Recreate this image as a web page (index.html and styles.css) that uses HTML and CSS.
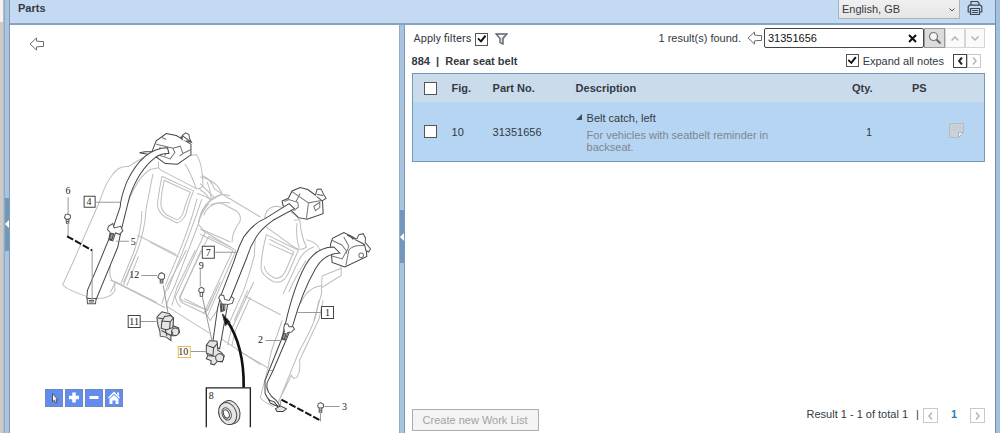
FILE: index.html
```html
<!DOCTYPE html>
<html lang="en">
<head>
<meta charset="utf-8">
<meta name="viewport" content="width=device-width, initial-scale=1">
<title>Parts</title>
<link rel="stylesheet" href="styles.css">
</head>
<body>
<div class="app">
  <div class="edge"></div>
  <div class="splitter"><button class="grip" aria-label="Collapse navigation"></button></div>
  <main class="main">
    <header class="header">
      <h1 class="title">Parts</h1>
      <div class="header-tools">
        <div class="lang">
          <select class="lang-select" aria-label="Language"><option>English, GB</option></select>
          <svg class="lang-arrow" width="6" height="4" viewBox="0 0 6 4"><path d="M.5.5 3 3 5.500.5" fill="none" stroke="#555"/></svg>
        </div>
        <button class="bare" aria-label="Print">
          <svg width="16" height="16" viewBox="0 0 16 16" fill="none" stroke="#3c4652" stroke-width="1.200"><path d="M4 5V1.500h6.500L12 3v2M3.500 12H1.200V6.500L2.500 5.200h11l1.300 1.300V12h-2.300M3.500 8.500h9v6h-9zM5 10.500h6M5 12.500h6"/></svg>
        </button>
      </div>
    </header>
    <div class="panes">
      <section class="figure" aria-label="Illustration">
        <svg class="drawing" viewBox="10 25 388 402">
          <!-- seat back -->
          <g class="faint">
            <g transform="translate(50 120) scale(.3333)">
              <path d="M308 96Q260 122 235 139Q205 136 188 162Q165 190 150 240L72 418L38 493Q50 508 110 528"/>
              <path d="M138 534Q178 536 194 512V484M180 442Q176 470 188 482L345 562M220 486L262 390Q285 325 287 270L308 162"/>
              <path d="M212 490L252 392Q276 320 275 272M180 442Q182 400 208 330Q245 180 300 148L325 143L332 150L438 205L452 206M325 143V125M438 103Q455 125 458 190Q460 205 438 206M403 132Q416 145 438 205M438 103L422 106"/>
              <path d="M335 168L430 212Q414 250 408 278Q398 306 380 308L345 290Q320 275 322 246Q328 205 335 168M342 180L420 216Q406 250 400 274Q392 298 378 298L350 284Q330 270 332 246Q334 215 342 180"/>
              <path d="M455 165Q485 180 492 205L514 220M470 185Q480 205 483 238M440 220Q462 225 483 238M440 235Q425 300 385 400L345 495M455 236Q430 310 395 400L352 510M475 250Q450 280 444 312L372 500Q345 550 350 565"/>
              <path d="M444 312Q454 240 515 222L540 226M444 312L460 330L540 365M465 335L375 530Q380 550 392 560M540 380L475 348L388 530L395 540L470 569M262 345L378 402M540 248Q478 240 460 285"/>
            </g>
            <g transform="translate(200 170) scale(.3333)">
              <path d="M0 20Q50 30 66 72L45 82Q20 95 0 135M66 72L180 140M0 176L107 240M0 192L98 240M30 105Q55 92 76 105L108 122Q125 135 118 155Q95 185 95 216M0 40L45 85M0 60Q15 65 30 90"/>
              <path d="M107 240L20 440M98 240L10 430M165 190L162 256Q148 310 130 360L90 450M193 145Q195 110 230 108Q265 112 298 148Q302 200 318 230Q300 245 278 228L190 165M298 148L280 150M290 158Q285 200 296 232"/>
              <path d="M198 193L294 240Q280 270 266 304Q252 342 220 334Q182 315 182 292Q182 255 198 193M207 207L280 244L258 296Q245 330 220 322Q192 306 192 288M205 220L280 254"/>
              <path d="M318 208Q352 216 359 240M340 230Q310 240 295 270L248 370M317 270Q285 320 265 365M142 360L102 450M132 376L240 433M365 317L422 294V315Q395 332 363 352L365 317M363 352V370Q355 400 340 450M300 400Q320 350 365 345M422 294L418 275"/>
            </g>
            <g transform="translate(110 250) scale(.3333)">
              <path d="M0 90L15 94L140 156M170 168L297 248M325 260L450 342M15 94Q5 120 0 126M40 104L75 15M50 106L85 18M120-24L205 20M155 160L172 105L228 0M185 165L200 112L255 0M210 140L272 0M210 140Q204 154 222 160L285 190L330 95M222 145L292 180L320 115M288 190L300 210L340 150M352 285L362 240L430 95M365 285L375 240L420 140"/>
            </g>
            <g transform="translate(200 300) scale(.3333)">
              <path d="M110 148L203 202Q210 150 230 105L245 60M203 202L180 290Q180 298 220 318M355 0L346 48Q330 95 297 150L230 315M368 0L356 55L297 180Q302 208 290 230Q280 238 273 224L232 308"/>
            </g>
          </g>
          <!-- belts, retractors and buckles -->
          <g class="ink">
            <g transform="translate(50 120) scale(.3333)">
              <path class="solid" d="M268 98L285 95L305 95L318 62L348 40L378 46L422 72V104L382 132L345 130L312 106Z"/>
              <path class="detail" d="M318 72L368 84L374 97L360 116L312 100M330 80L325 97M348 89L344 108M368 84L390 78L398 100L422 88M398 100L388 108M335 52L348 58"/>
              <path class="solid" d="M352 83Q278 84 230 185Q212 230 210 260L183 340L150 420L112 510L110 533L138 537L203 380L213 330L238 230Q265 150 315 112Q335 98 356 100Z"/>
              <path class="mid" d="M396 60V46L406 38L416 43L418 55L424 67L408 62M390 52L398 48L424 67"/>
              <path class="mid" d="M175 318L188 310L192 323L212 318L218 332L208 342L196 338L188 362L176 358L180 336L172 328Z"/><path class="shade" d="M182 339L191 341L185 359L178 356Z"/>
              <path class="mid" d="M111 534H138L136 550H112ZM116 540L132 540M116 545H132"/>
              <path class="mid" d="M46 283L54 281L61 285V293L57 296L56 309L49 309L48 297L43 292Z"/><path d="M48 297H57M49 303H56"/>
              <path class="mid" d="M327 461L334 457L343 462V472L338 478V488L330 488L330 477L323 471Z"/><path d="M330 477H340M330 482H338"/>
              <path class="mid" d="M447 504L454 501L461 505V514L457 518V529L450 528L449 516L445 512Z"/><path d="M449 516H458"/>
            </g>
            <g transform="translate(200 170) scale(.3333)">
              <path class="solid" d="M248 106L245 92L264 84L275 62L299 52L322 58L366 90L368 130L320 147L294 142L270 118Z"/>
              <path class="detail" d="M252 94L265 88L292 96L294 110L280 122M286 96L299 70M318 145L324 98L366 90M324 98L275 64M340 108L358 96V112L345 121Z"/>
              <path class="mid" d="M345 75L350 57L362 56L369 72L377 84L365 92L350 80M350 73L368 76"/>
              <path class="solid" d="M390 222L396 204L430 187L457 200L496 226L499 258L433 290L395 276Z"/>
              <path class="detail" d="M394 210L424 224L438 242L425 266L392 256M430 200L445 228L436 250M436 286L445 240Q455 222 496 226"/>
              <circle cx="482" cy="255" r="7" class="detail"/>
              <path class="mid" d="M440 194L450 196L456 206L470 204L475 193L488 190L495 203L494 216L510 236L504 245L496 240L492 222L472 212Z"/>
            </g>
            <g transform="translate(190 220) scale(.3333)">
              <path class="belt" d="M296-50L224-5Q190 8 160 50Q144 80 132 120L92 225L82 262L66 375L88 385L112 252L120 235L170 110Q182 70 206 38Q220 20 248 0L312-35Z"/>
              <path class="belt" d="M430 80Q375 80 345 135Q310 200 285 310L274 355L236 450L248 450L295 340L308 312Q335 215 375 145Q400 100 448 98Z"/>
              <path class="mid" d="M85 232L90 223L100 225L103 237L116 240L123 228L131 235L126 249L112 252L104 251L103 270L92 274L90 253L93 246Z"/>
              <path class="shade" d="M94 250L101 252L99 270L93 271Z"/>
              <path class="mid" d="M280 322L283 311L292 311L296 319L308 319L312 326L303 335L292 336L285 359L273 356L282 333Z"/>
              <path class="shade" d="M280 338L287 340L282 357L275 355Z"/>
            </g>
            <g transform="translate(110 250) scale(.3333)">
              <path class="buckle" d="M140 200L155 184L178 190L188 202V226L205 232L208 246L195 256L182 256V270L168 260L150 257L149 242L143 224Z"/>
              <path class="buckle" d="M155 212L163 198L180 195L190 202L188 231L170 238L153 234ZM155 212L180 214L190 202M180 214L178 236M142 203L160 205"/>
              <circle cx="195" cy="244" r="11" class="buckle"/><path d="M154 240L182 255L188 244M165 236L170 256"/>
              <path class="buckle" d="M288 284L299 270L320 272L323 300L332 305L342 316L336 334L321 332L312 343L301 340L303 331L288 325L293 313L288 307Z"/>
              <path class="buckle" d="M288 284L310 292L322 278M310 292L308 316L290 308M294 316L325 318"/><circle cx="328" cy="322" r="12" class="buckle"/>
              <path class="frame" d="M288 530V412H420V530"/>
              <ellipse cx="360" cy="485" rx="28" ry="36" transform="rotate(-22 360 485)" class="buckle"/>
              <ellipse cx="352" cy="489" rx="26" ry="34" transform="rotate(-22 352 489)" class="buckle"/>
              <ellipse cx="349" cy="490" rx="13" ry="19" transform="rotate(-22 349 490)" class="mid"/>
              <ellipse cx="348" cy="490" rx="8" ry="13" transform="rotate(-22 348 490)"/>
              <path d="M400 411Q402 285 348 207" fill="none" stroke="#111" stroke-width="8"/><path d="M336 190L359 215L345 225Z" fill="#111"/>
            </g>
            <g transform="translate(200 300) scale(.3333)">
              <path class="belt" d="M206 210L194 240V278Q205 306 235 317L240 318L228 300Q194 275 200 247L218 210"/>
              <path class="buckle" d="M225 325L240 316L258 325L248 333H230ZM205 298L222 304L232 318L210 308Z"/>
              <path class="mid" d="M353 310L360 306L369 311V319L364 323V335H356V323L352 319Z"/><path d="M356 322H365M356 329H364"/>
            </g>
          </g>
          <g class="leaders">
            <path d="M68 197V214M68 222V236M92 250V300M96 202H120M116 241H129M141 275H157M163 285L168 314M200 269V286M202 296L212 342M215 252H238M140 321H158M190 351H206M297 312H320M265 340H281M280 400V407M320 411V421M324 406H339"/>
          </g>
          <path class="dash" d="M67 236L92 250"/><path class="dash" d="M281 399L320 420"/>
          <g class="boxes"><path d="M84 196h11v11h-11zM202 246h12v12h-12zM128 315h12v12h-12zM321 306h12v12h-12z"/><path class="picked" d="M178 346h12v11h-12z"/></g>
          <g class="labels">
            <text x="68" y="194">6</text><text x="89" y="205">4</text><text x="133" y="245">5</text><text x="134" y="278">12</text><text x="201" y="269">9</text><text x="208" y="256">7</text><text x="134" y="325">11</text><text x="183" y="355">10</text><text x="327" y="316">1</text><text x="260" y="343">2</text><text x="344" y="409">3</text><text x="211" y="398">8</text>
          </g>
        </svg>
        <button class="bare figure-back" aria-label="Previous illustration"><svg width="16" height="14" viewBox="0 0 16 14"><path class="arrow" d="M1 7 7.500 1V4L11 4.500H14.500V9.500H11L7.500 10V13Z"/></svg></button>
        <div class="figure-tools">
          <button class="tool" aria-label="Select"><svg width="18" height="18" viewBox="0 0 18 18"><path d="M7.500 4.500V13L9.300 11.300 10.500 14 12 13.200 10.900 10.800H13Z" fill="#f6f6f6" stroke="#555"/></svg></button>
          <button class="tool" aria-label="Zoom in"><svg width="18" height="18" viewBox="0 0 18 18"><path d="M9 3.500V13.500M4 8.500H14" stroke="#fff" stroke-width="3.500"/></svg></button>
          <button class="tool" aria-label="Zoom out"><svg width="18" height="18" viewBox="0 0 18 18"><path d="M4.500 8.500H13.500" stroke="#fff" stroke-width="3"/></svg></button>
          <button class="tool" aria-label="Fit"><svg width="18" height="18" viewBox="0 0 18 18" fill="#fff"><path d="M9 2.500 15 8.500 14 9.500 9 4.800 4 9.500 3 8.500ZM12 3.500H14V7L12 5ZM9 6 13.500 10V15H10.500V11.500H7.500V15H4.500V10Z"/></svg></button>
        </div>
      </section>
      <div class="splitter"><button class="grip" aria-label="Collapse illustration"></button></div>
      <section class="list">
        <div class="bar">
          <div class="filters"><label for="filters">Apply filters</label><input class="check" id="filters" type="checkbox" checked>
            <button class="bare" aria-label="Filter"><svg width="13" height="12" viewBox="0 0 13 12"><path d="M1 1H12L8 5.500V11L5 9.500V5.500Z" fill="#f4f6f8" stroke="#5a636c" stroke-width="1.300"/><path d="M11 1.500 7.500 5.500V10" fill="none" stroke="#7a838c" stroke-width="1.500"/></svg></button>
          </div>
          <div class="search">
            <span class="found">1 result(s) found.</span>
            <button class="bare" aria-label="Back"><svg width="16" height="14" viewBox="0 0 16 14"><path class="arrow" d="M1 7 7.500 1V4L11 4.500H14.500V9.500H11L7.500 10V13Z"/></svg></button>
            <div class="search-box">
              <input class="search-input" type="text" value="31351656" aria-label="Search">
              <button class="bare clear" aria-label="Clear"><svg width="9" height="9" viewBox="0 0 9 9"><path d="M1 1 8 8M8 1 1 8" stroke="#111" stroke-width="2"/></svg></button>
            </div>
            <button class="square find" aria-label="Find"><svg width="14" height="14" viewBox="0 0 14 14" fill="none"><circle cx="5.500" cy="5.500" r="4" fill="#f5f5f5" stroke="#777" stroke-width="1.200"/><path d="M8.500 8.500 12.500 12.500" stroke="#666" stroke-width="2"/></svg></button>
            <button class="square" aria-label="Previous result"><svg width="8" height="5" viewBox="0 0 8 5"><path class="chev" d="M.5 4.500 4 1 7.500 4.500"/></svg></button>
            <button class="square" aria-label="Next result"><svg width="8" height="5" viewBox="0 0 8 5"><path class="chev" d="M.5.5 4 4 7.500.5"/></svg></button>
          </div>
        </div>
        <div class="bar notes">
          <h2 class="group">884&nbsp; |&nbsp; Rear seat belt</h2>
          <div class="expand"><input class="check" id="notes" type="checkbox" checked><label for="notes">Expand all notes</label>
            <div class="pager-pair"><button class="page strong" aria-label="Previous group"><svg width="5" height="8" viewBox="0 0 5 8"><path d="M4 .5 1 4 4 7.500" fill="none" stroke="#222" stroke-width="2"/></svg></button><button class="page" aria-label="Next group"><svg width="5" height="8" viewBox="0 0 5 8"><path class="chev" d="M1 .5 4 4 1 7.500"/></svg></button></div>
          </div>
        </div>
        <table class="parts">
          <thead><tr><th class="c-check"><input class="check" type="checkbox" aria-label="Select all"></th><th class="c-fig">Fig.</th><th class="c-no">Part No.</th><th>Description</th><th class="c-qty">Qty.</th><th class="c-ps">PS</th><th class="c-note"></th></tr></thead>
          <tbody><tr><td><input class="check" type="checkbox" aria-label="Select 31351656"></td><td>10</td><td>31351656</td>
            <td><div class="desc"><svg class="twisty" width="6" height="6" viewBox="0 0 6 6"><path d="M6 0V6H0Z" fill="#3b4c5e"/></svg><div><div>Belt catch, left</div><div class="remark">For vehicles with seatbelt reminder in backseat.</div></div></div></td>
            <td class="num">1</td><td></td><td><button class="bare" aria-label="Note"><svg width="15" height="15" viewBox="0 0 15 15"><path d="M.5.5H14.500V9.500L9.500 14.500H.5Z" fill="#cbd1d8" stroke="#b2bcc6"/><path d="M9.500 14.500V9.500H14.500Z" fill="#eef2f6" stroke="#a9b3be"/><path d="M3 4H12M3 7H12" stroke="#c3cad1"/></svg></button></td></tr></tbody>
        </table>
        <footer class="footer">
          <button class="create" disabled>Create new Work List</button>
          <div class="result"><span>Result 1 - 1 of total 1</span><span class="bar-mark">|</span><button class="page" aria-label="Previous page"><svg width="5" height="8" viewBox="0 0 5 8"><path class="chev" d="M4 .5 1 4 4 7.500"/></svg></button><a class="current" href="#">1</a><button class="page" aria-label="Next page"><svg width="5" height="8" viewBox="0 0 5 8"><path class="chev" d="M1 .5 4 4 1 7.500"/></svg></button></div>
        </footer>
      </section>
    </div>
  </main>
  <div class="edge-right"></div>
</div>
</body>
</html>
```
FILE: styles.css
```css
* { box-sizing: border-box; }
body { margin: 0; font: 11px/14px "Liberation Sans", Arial, sans-serif; color: #333a42; background: #fff; }
button, input, select { font: inherit; color: inherit; margin: 0; padding: 0; }
button { display: inline-flex; align-items: center; justify-content: center; }
svg { display: block; }
.bare { border: 0; background: none; }
.app { display: flex; min-height: 100vh; }
.edge { width: 4px; background: linear-gradient(#f4f4f4 22px, #cbcaca 22px); border-right: 1px solid #bbb; }
.edge-right { width: 5px; background: #a5c0dc; border-left: 1px solid #6f8fb0; }
.splitter { display: flex; align-items: center; width: 6px; padding-top: 15px; background: #a9c4df; border-right: 1px solid #8099b5; border-left: 1px solid #91abc7; }
.grip { flex: 1; height: 53px; border: 0; background: #7397bb; }
.grip::before { content: ""; border: solid transparent; border-width: 4px 4px 4px 0; border-right-color: #fff; }
.main { flex: 1; display: flex; flex-direction: column; min-width: 0; }
.header { display: flex; justify-content: space-between; height: 25px; padding: 0 12px 0 8px; background: #c3daf2; border-bottom: 2px solid #86a3c5; }
.title { margin: 0; font-size: 11px; line-height: 16px; }
.header-tools { display: flex; gap: 7px; align-items: flex-start; }
.lang { display: grid; align-items: center; }
.lang > * { grid-area: 1 / 1; }
.lang-select { appearance: none; width: 122px; height: 19px; padding: 0 3px; border: 1px solid #aab2bb; border-top: 0; border-radius: 0; background: linear-gradient(#f0f0f0, #e5e5e5); }
.lang-arrow { justify-self: end; margin-right: 5px; pointer-events: none; }
.panes { flex: 1; display: flex; min-height: 0; }
.figure { flex: 389 1 0; min-width: 0; position: relative; }
.drawing { width: 100%; }
.figure-back { position: absolute; left: 19px; top: 12px; }
.figure-tools { position: absolute; left: 35px; bottom: 26px; display: flex; gap: 2px; }
.tool { width: 18px; height: 18px; border: 0; outline: 1px solid #7088bd; outline-offset: -1px; background: #628cf0; }
.arrow { fill: #fff; stroke: #6c6c6c; stroke-width: 1; }
.faint { fill: none; stroke: #bdbdbd; stroke-width: 3; }
.ink { fill: none; stroke: #444; stroke-width: 3; }
.solid, .mid { fill: #fff; }
.mid { stroke: #555; }
.detail { fill: none; stroke: #777; }
.shade { fill: #999; stroke: #444; }
.belt { fill: #fff; stroke: #444; stroke-width: 3; }
.buckle { fill: #e5e5e5; stroke: #444; }
.frame { fill: none; stroke: #222; stroke-width: 4; }
.leaders { fill: none; stroke: #999; stroke-width: 1; }
.dash { fill: none; stroke: #111; stroke-width: 2; stroke-dasharray: 7 2; }
.boxes { fill: #fff; stroke: #444; stroke-width: 1; }
.picked { stroke: #ebb84e; }
.labels { font: 10px "Liberation Serif", serif; fill: #222; text-anchor: middle; }
.list { flex: 574 1 0; min-width: 0; display: flex; flex-direction: column; padding: 3px 10px 2px 7px; }
.bar { display: flex; justify-content: space-between; align-items: center; }
.filters { display: flex; align-items: center; gap: 4px; padding: 2px 0 0 2px; font-family: Roboto, sans-serif; }
.filters .check { margin-right: 3px; }
.check { appearance: none; width: 13px; height: 13px; border: 1px solid #555; background: #fff; display: grid; place-items: center; }
.check:checked::before { content: ""; width: 9px; height: 9px; background: #111; clip-path: polygon(0 50%, 14% 35%, 38% 62%, 82% 5%, 100% 20%, 42% 92%); }
.search { display: flex; align-items: center; }
.found { margin-right: 6px; }
.search-box { display: flex; align-items: center; width: 160px; height: 20px; margin-left: 1px; padding: 0 6px 0 3px; border: 1px solid #444; border-radius: 2px; }
.search-input { flex: 1; min-width: 0; border: 0; outline: 0; color: #111; }
.square { width: 20px; height: 20px; border: 1px solid #d5d5d5; background: #fafafa; }
.square.find { width: 21px; border-color: #999; background: #dcdcdc; }
.chev { fill: none; stroke: #b4b4b4; stroke-width: 1.500; }
.notes { height: 25px; padding-right: 4px; }
.group { margin: 0; font-size: 11px; line-height: 14px; }
.expand { display: flex; align-items: center; gap: 4px; }
.pager-pair { display: flex; margin-left: 5px; }
.page { width: 14px; height: 14px; border: 1px solid #c9c9c9; background: #fff; }
.page.strong { border-color: #444; }
.parts { width: 100%; border: 1px solid #7898b8; border-collapse: separate; border-spacing: 0; table-layout: fixed; background: #b6d5f2; }
.parts th, .parts td { padding: 0 0 0 5px; text-align: left; }
.parts th { height: 28px; background: #cadcec; }
.parts td { height: 59px; }
.parts th:first-child, .parts td:first-child { padding-left: 11px; }
.c-check { width: 34px; }
.c-fig { width: 41px; }
.c-no { width: 83px; }
.c-qty { width: 60px; }
.c-ps { width: 37px; }
.c-note { width: 40px; }
.parts .num { padding-left: 19px; }
.desc { display: flex; gap: 5px; }
.twisty { margin-top: 3px; }
.remark { max-width: 190px; padding-top: 4px; line-height: 12px; color: #7b8794; }
.footer { margin-top: auto; display: flex; justify-content: space-between; align-items: flex-start; }
.create { height: 22px; padding: 0 10px; border: 1px solid #adadad; background: #f4f4f4; color: #a3a3a3; }
.result { display: flex; align-items: center; line-height: 11px; }
.result .page { width: 15px; height: 15px; margin-top: -4px; margin-bottom: -4px; }
.result > span, .current { margin-top: -2px; }
.bar-mark { margin: 0 4px 0 8px; }
.current { margin-left: 13px; margin-right: 13px; color: #2b7fb8; font-weight: bold; text-decoration: none; }
.footer .result { padding-top: 2px; }
```
